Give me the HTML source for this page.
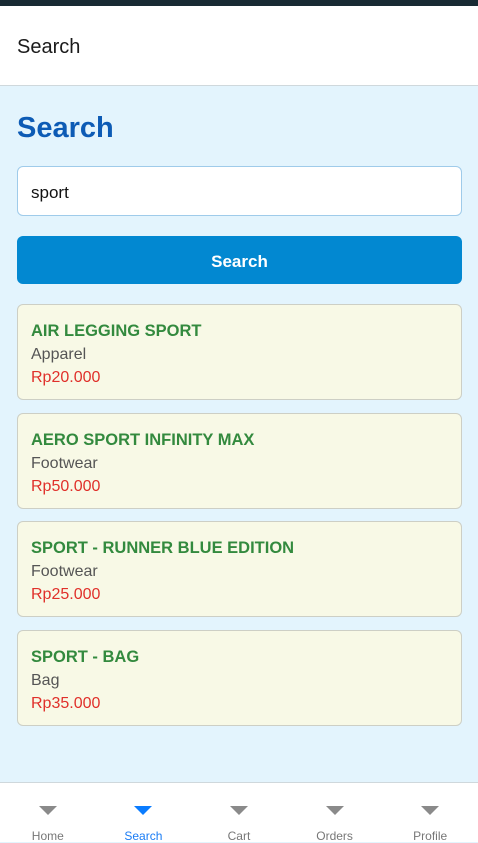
<!DOCTYPE html><html><head><style>
*{box-sizing:border-box;margin:0;padding:0}
body{width:478px;height:842px;overflow:hidden;font-family:"Liberation Sans",sans-serif;background:#e3f4fd;position:relative}
.top{height:6px;background:#182a33}
.hdr{height:80px;background:#fff;border-bottom:1px solid #cfd8dc;padding:0 17px;font-size:20px;line-height:83px;color:#1a1a1a}
h1{position:absolute;left:17px;top:112px;font-size:29px;color:#0d5bb5;font-weight:bold}
.inp{position:absolute;left:17px;top:166px;width:445px;height:50px;background:#fff;border:1px solid #9fcbea;border-radius:6px;padding-left:13px;line-height:52px;font-size:17px;color:#111}
.btn{position:absolute;left:17px;top:236px;width:445px;height:48px;background:#0288d1;border-radius:6px;color:#fff;font-weight:bold;font-size:17px;text-align:center;line-height:51px}
.card{position:absolute;left:17px;width:445px;height:96px;background:#f8f9e6;border:1px solid #cdcfc5;border-radius:6px;padding:15px 0 0 13px}
.t{color:#338a3e;font-weight:bold;font-size:16.5px;line-height:23px}
.c{color:#555;font-size:16px;line-height:23px}
.p{color:#e0302a;font-size:16px;line-height:23px}
.nav{position:absolute;left:0;top:782px;width:478px;height:60px;background:#fff;border-top:1px solid #cfd8dc;display:flex}
.nav div{flex:1;text-align:center;font-size:12px;color:#777;padding-top:23px}
.nav i{display:block;margin:0 auto 14px;width:0;height:0;border-left:9px solid transparent;border-right:9px solid transparent;border-top:9px solid #8a8a8a}
.nav .a{color:#1a7cf5}.nav .a i{border-top-color:#0a7cff}
</style></head><body>
<div class="top"></div>
<div class="hdr">Search</div>
<h1>Search</h1>
<div class="inp">sport</div>
<div class="btn">Search</div>
<div class="card" style="top:304px"><div class="t">AIR LEGGING SPORT</div><div class="c">Apparel</div><div class="p">Rp20.000</div></div>
<div class="card" style="top:413px"><div class="t">AERO SPORT INFINITY MAX</div><div class="c">Footwear</div><div class="p">Rp50.000</div></div>
<div class="card" style="top:521px"><div class="t">SPORT - RUNNER BLUE EDITION</div><div class="c">Footwear</div><div class="p">Rp25.000</div></div>
<div class="card" style="top:630px"><div class="t">SPORT - BAG</div><div class="c">Bag</div><div class="p">Rp35.000</div></div>
<div class="nav"><div><i></i>Home</div><div class="a"><i></i>Search</div><div><i></i>Cart</div><div><i></i>Orders</div><div><i></i>Profile</div></div>
</body></html>
